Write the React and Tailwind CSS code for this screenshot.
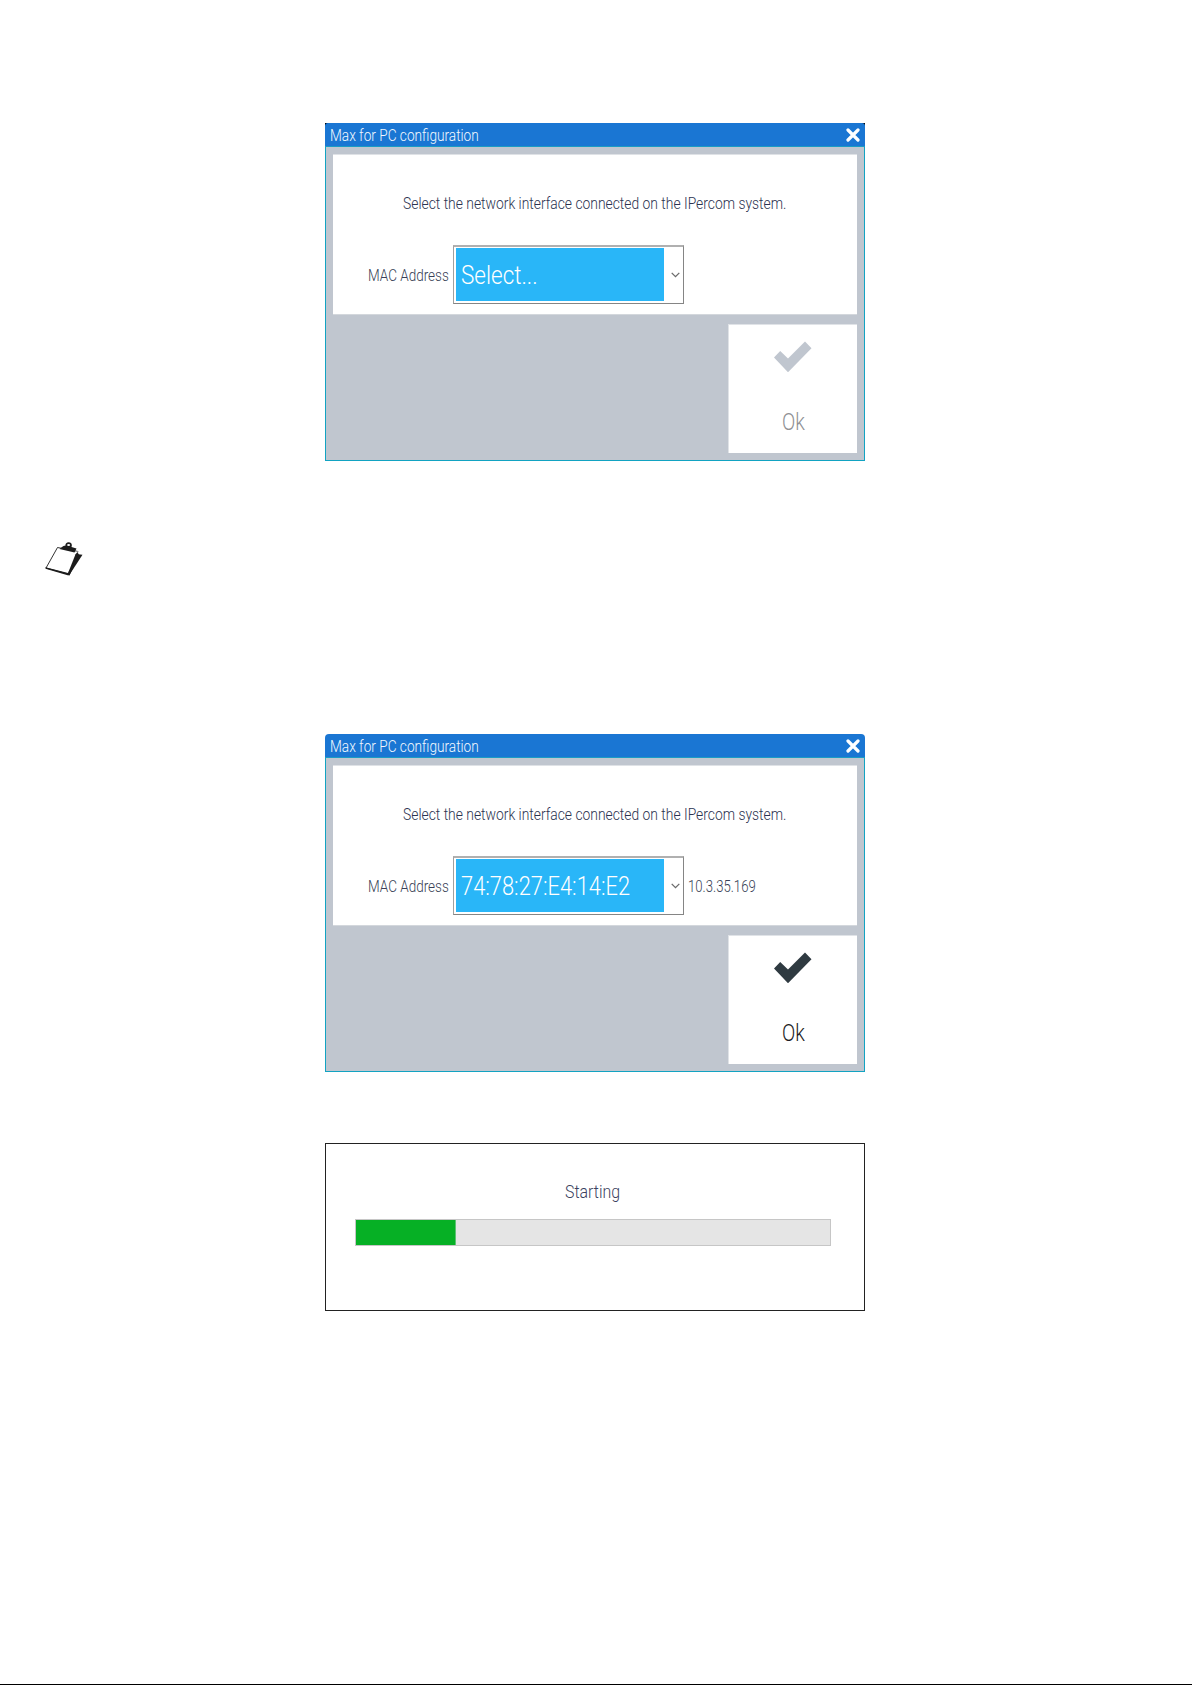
import { useLayoutEffect, useRef, useState } from "react";

// squeezes a line of text into the width of its box
function FitText({ className, children }) {
  const box = useRef(null);
  const text = useRef(null);
  const [scale, setScale] = useState(1);

  useLayoutEffect(() => {
    const fit = () => {
      setScale(box.current.clientWidth / text.current.offsetWidth);
    };
    fit();
    document.fonts.ready.then(fit);
  }, [children]);

  return (
    <div ref={box} className={`shrink-0 whitespace-nowrap ${className}`}>
      <span
        ref={text}
        className="inline-block origin-left"
        style={{ transform: `scaleX(${scale})` }}
      >
        {children}
      </span>
    </div>
  );
}

function TitleBar({ rounded }) {
  return (
    <div
      className={`flex h-6 items-start justify-between border-b border-[#1b9cc4] bg-[#1a76d3] pr-[5px] pl-[5px] ${
        rounded ? "rounded-t-[4px]" : "rounded-t-[3px]"
      }`}
    >
      <FitText className="w-[149px] text-[16.5px] leading-[26px] text-[#f2f8fe]">
        Max for PC configuration
      </FitText>
      <svg className="mt-[5px] h-[14px] w-[14px]" viewBox="0 0 14 14">
        <path
          d="M2 2 L12 12 M12 2 L2 12"
          stroke="#fff"
          strokeWidth="3.2"
          strokeLinecap="round"
        />
      </svg>
    </div>
  );
}

function Select({ value, valueClass }) {
  return (
    <div className="flex h-[59px] w-[231px] shrink-0 border border-t-2 border-[#858585] border-t-[#b0b0b0] border-l-[#a0a0a0] bg-white">
      <div className="mt-[1px] ml-[2px] flex h-[53px] w-[208px] items-center bg-[#29b6f8] pl-[5px]">
        <FitText className={`text-[26px] leading-[52px] text-white ${valueClass}`}>
          {value}
        </FitText>
      </div>
      <div className="flex flex-1 items-center justify-center pl-[3px]">
        <svg className="h-[6px] w-[9px]" viewBox="0 0 9 6" fill="none">
          <path d="M0.7 0.9 L4.5 4.6 L8.3 0.9" stroke="#6b6b6b" strokeWidth="1.3" />
        </svg>
      </div>
    </div>
  );
}

function ConfigWindow({ value, valueClass, address, disabled }) {
  return (
    <div className={disabled ? "w-[540px] bg-black" : "w-[540px]"}>
      <TitleBar rounded={!disabled} />
      <div className="h-[314px] border border-t-0 border-[#12a3c2] bg-[#c0c6cf] pt-[7px] pr-[7px] pl-[7px]">
        <div className="h-[161px] border-y border-t-[#dfe2e6] border-b-[#d3d7dc] bg-white">
          <FitText className="mt-[36px] ml-[70px] w-[383px] text-[16.5px] leading-[26px] text-[#2b3350]">
            Select the network interface connected on the IPercom system.
          </FitText>
          <div className="mt-[28px] ml-[35px] flex items-center">
            <FitText className="mr-[4px] w-[81px] text-[17px] leading-[26px] text-[#383f56]">
              MAC Address
            </FitText>
            <Select value={value} valueClass={valueClass} />
            {address && (
              <FitText className="ml-[4px] w-[68px] text-[17px] leading-[26px] text-[#383f56]">
                {address}
              </FitText>
            )}
          </div>
        </div>
        <div className="mt-[9px] ml-auto flex h-[129px] w-[129px] flex-col items-center border-t border-l border-[#e0e3e7] bg-white">
          <svg className="mt-[16px] h-[32px] w-[38px]" viewBox="0 0 38 32">
            <path
              d="M0 16.5 L6.2 10 L14 17.6 L31 0.5 L37.5 7.2 L14 31.2 Z"
              fill={disabled ? "#c0c6cf" : "#2f3a41"}
            />
          </svg>
          <FitText
            className={`mt-[34px] w-[23px] text-[23px] leading-[32px] ${
              disabled ? "text-[#8f9194]" : "text-[#1c1c24]"
            }`}
          >
            Ok
          </FitText>
        </div>
      </div>
    </div>
  );
}

function NoteIcon() {
  return (
    <svg className="h-[35px] w-[38px]" viewBox="0 0 38 35">
      <path d="M31 12 L37.5 12.8 L24 33.5 L22 31 Z" fill="#1c1c1c" />
      <path
        d="M12.5 5.5 L33 9.5 L23 32 L1 26 Z"
        fill="#fff"
        stroke="#1c1c1c"
        strokeWidth="0.9"
      />
      <path d="M29 10 L33.4 9.5 L31.5 14 L22.8 32.5 Z" fill="#fff" />
      <path d="M32.5 10 L30.5 12.2 L22.5 32.5 L24.5 33.5 L34 13 Z" fill="#1c1c1c" />
      <path d="M0.5 25.2 L23 31 L23.5 33.5 L0.5 26.8 Z" fill="#1c1c1c" />
      <path
        d="M18.5 4 L20.5 3.6 C20 1.2 22 0 24 0.2 C26.5 0.5 27.5 2.5 26.5 5 L31.5 6.5 L29.5 10.5 L14.5 7 L17 5 Z"
        fill="#1c1c1c"
      />
      <ellipse cx="23.6" cy="2.9" rx="1.5" ry="1" fill="#fff" />
    </svg>
  );
}

function App() {
  const progress = 21;

  return (
    <div className="flex h-[1685px] w-[1192px] flex-col border-b border-black bg-white pt-[123px] font-[Roboto,sans-serif] font-light">
      <div className="ml-[325px]">
        <ConfigWindow value="Select..." valueClass="w-[77px]" disabled />
      </div>

      <div className="mt-[81px] ml-[45px]">
        <NoteIcon />
      </div>

      <div className="mt-[157px] ml-[325px]">
        <ConfigWindow
          value="74:78:27:E4:14:E2"
          valueClass="w-[169px]"
          address="10.3.35.169"
        />
      </div>

      <div className="mt-[71px] ml-[325px] h-[168px] w-[540px] border border-[#222222]">
        <FitText className="mt-[34px] ml-[239px] w-[55px] text-[18.5px] leading-[28px] text-[#3b4260]">
          Starting
        </FitText>
        <div className="mt-[13px] ml-[29px] h-[27px] w-[476px] border border-[#c6c6c6] bg-[#e5e5e5]">
          <div
            className="h-full border-r border-[#5cc273] bg-[#06b025]"
            style={{ width: `${progress}%` }}
          />
        </div>
      </div>
    </div>
  );
}

export default App;
